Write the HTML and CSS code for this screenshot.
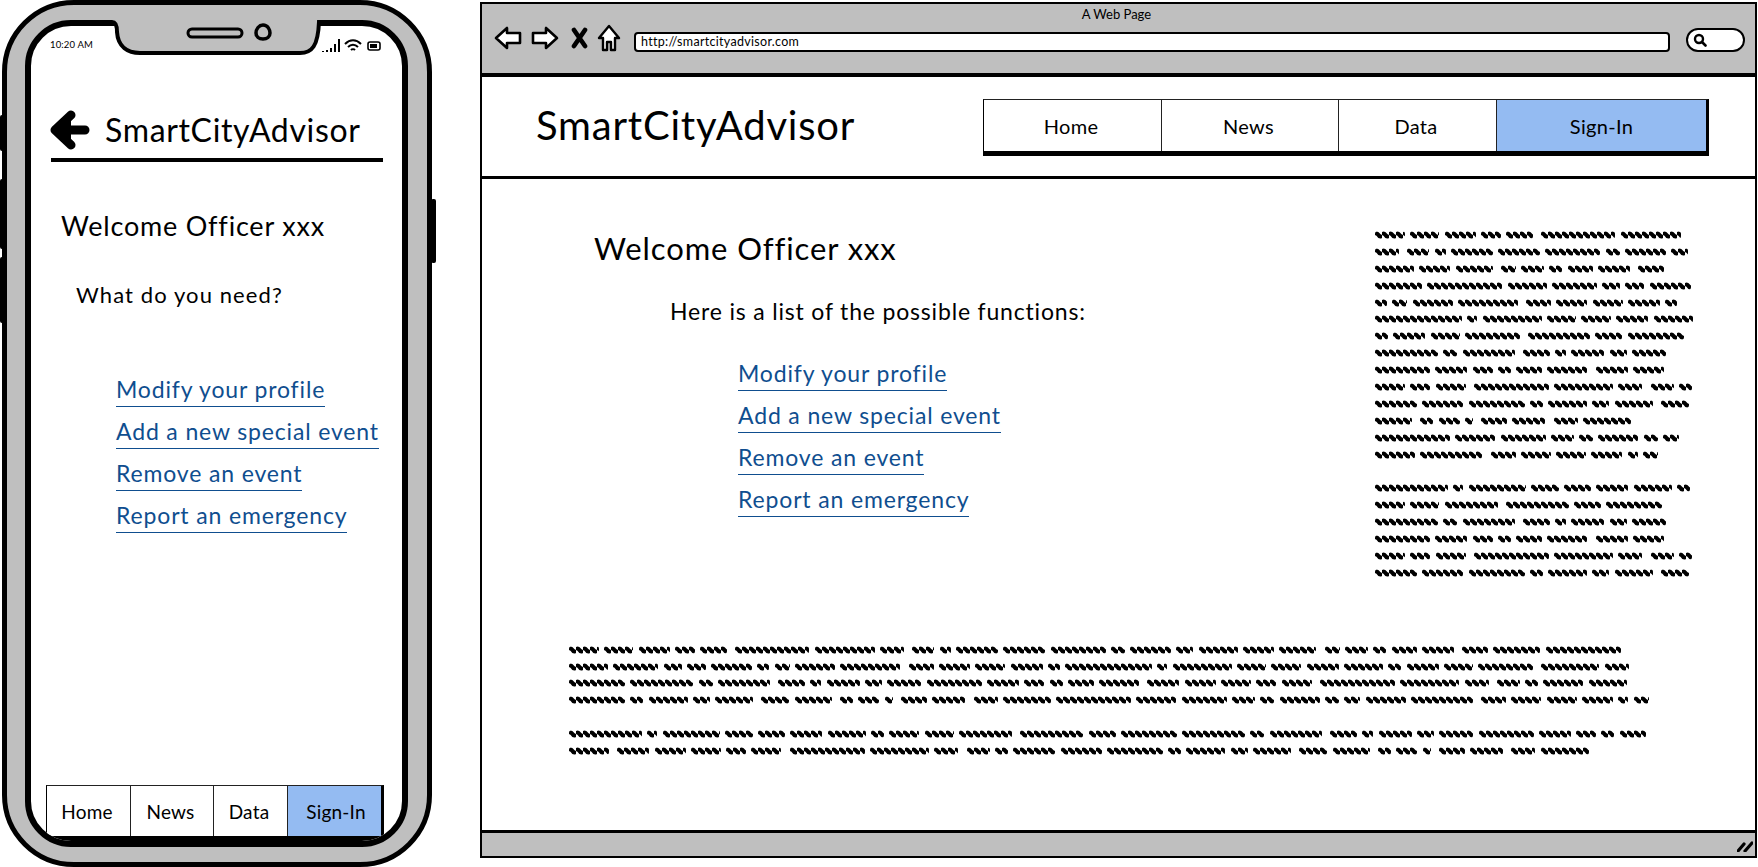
FILE: index.html
```html
<!DOCTYPE html>
<html lang="en">
<head>
<meta charset="utf-8">
<title>SmartCityAdvisor wireframes</title>
<link rel="stylesheet" href="styles.css">
</head>
<body>
<div class="desk">
  <section class="phone">
    <span class="btn btn-l1"></span><span class="btn btn-l2"></span><span class="btn btn-l3"></span><span class="btn btn-r"></span>
    <svg class="notch" width="216" height="44" viewBox="0 0 216 44">
      <path d="M-4 -4 V2 H-2 C2 2 3 6 3 12 C4 27 14 33 26 33 H186 C198 33 204 26 205 2 H209 V-4 Z" fill="#bfbfbf"/>
      <path d="M-4 2 H-2 C2 2 3 6 3 12 C4 27 14 33 26 33 H186 C198 33 204 26 205 2 H209" fill="none" stroke="#000" stroke-width="4"/>
      <rect x="74" y="9" width="54" height="8" rx="4" fill="#bfbfbf" stroke="#000" stroke-width="3"/>
      <path d="M149 5 C154 5 156 10 156 13 C156 17 153 19 149 19 C145 19 142 17 142 13 C142 9 145 5 149 5Z" fill="#bfbfbf" stroke="#000" stroke-width="3.5"/>
    </svg>
    <div class="screen">
      <div class="status">
        <span class="clock">10:20 AM</span>
        <svg class="status-icons" width="60" height="14" viewBox="0 0 60 14">
          <path d="M1 13v-1M5 13v-2M9 13v-4M13 13v-8M17 13v-13" stroke="#000" stroke-width="2" fill="none"/>
          <path d="M23 5c5-5 11-5 16 0M26 8c3-3 7-3 10 0M29 11c1-1 3-1 4 0" stroke="#000" stroke-width="2" fill="none"/>
          <rect x="46" y="3" width="12" height="8" rx="2" fill="#fff" stroke="#000" stroke-width="1.6"/>
          <rect x="48" y="5" width="7" height="4" fill="#000"/>
        </svg>
      </div>
      <header class="phone-head">
        <svg class="back" width="40" height="40" viewBox="0 0 40 40">
          <path d="M35 20H6M21 5 5 20 21 35" stroke="#000" stroke-width="9" stroke-linecap="round" stroke-linejoin="round" fill="none"/>
          <path d="M21 5 3 20 21 35Z" fill="#000"/>
        </svg>
        <h1 class="phone-title">SmartCityAdvisor</h1>
      </header>
      <h2 class="phone-welcome">Welcome Officer xxx</h2>
      <p class="phone-ask">What do you need?</p>
      <ul class="links phone-links">
        <li><a href="#">Modify your profile</a></li>
        <li><a href="#">Add a new special event</a></li>
        <li><a href="#">Remove an event</a></li>
        <li><a href="#">Report an emergency</a></li>
      </ul>
      <nav class="tabs phone-tabs">
        <a class="pt1" href="#">Home</a><a class="pt2" href="#">News</a><a class="pt3" href="#">Data</a><a class="pt4 on" href="#">Sign-In</a>
      </nav>
    </div>
  </section>

  <section class="browser">
    <div class="chrome">
      <div class="page-name">A Web Page</div>
      <div class="toolbar">
        <svg width="28" height="24" viewBox="0 0 28 24"><path d="M2 12 13 2V7H26V17H13V22Z" fill="#fff" stroke="#000" stroke-width="2.6" stroke-linejoin="round"/></svg>
        <svg class="ic-fwd" width="28" height="24" viewBox="0 0 28 24"><path d="M26 12 15 2V7H2V17H15V22Z" fill="#fff" stroke="#000" stroke-width="2.6" stroke-linejoin="round"/></svg>
        <svg class="ic-x" width="17" height="22" viewBox="0 0 17 22"><path d="M3 3 14 19M14 3 3 19" stroke="#000" stroke-width="4.6" stroke-linecap="round"/></svg>
        <svg class="ic-home" width="24" height="28" viewBox="0 0 24 28"><path d="M12 2 22 14H18V26H14V18H10V26H6V14H2Z" fill="#fff" stroke="#000" stroke-width="2.4" stroke-linejoin="round"/></svg>
        <div class="url">http://smartcityadvisor.com</div>
        <div class="search"><svg width="14" height="14" viewBox="0 0 14 14"><circle cx="6" cy="6" r="4" fill="#fff" stroke="#000" stroke-width="2.4"/><path d="M9 9 12.5 12.5" stroke="#000" stroke-width="2.6" stroke-linecap="round"/></svg></div>
      </div>
    </div>
    <header class="site-head">
      <h1 class="site-title">SmartCityAdvisor</h1>
      <nav class="tabs site-tabs">
        <a class="st1" href="#">Home</a><a class="st2" href="#">News</a><a class="st3" href="#">Data</a><a class="st4 on" href="#">Sign-In</a>
      </nav>
    </header>
    <main class="content">
      <div class="upper">
        <div class="intro">
          <h2 class="welcome">Welcome Officer xxx</h2>
          <p class="lead">Here is a list of the possible functions:</p>
          <ul class="links site-links">
            <li><a href="#">Modify your profile</a></li>
            <li><a href="#">Add a new special event</a></li>
            <li><a href="#">Remove an event</a></li>
            <li><a href="#">Report an emergency</a></li>
          </ul>
        </div>
        <div class="scribble side">
          <div class="para">
            <div class="sl"><i style="width:30px"></i><i style="width:29px"></i><i style="width:31px"></i><i style="width:20px"></i><i style="width:27px"></i><i class="g" style="width:74px"></i><i style="width:60px"></i></div>
            <div class="sl"><i style="width:24px"></i><i class="g" style="width:22px"></i><i style="width:11px"></i><i style="width:42px"></i><i style="width:42px"></i><i style="width:55px"></i><i style="width:14px"></i><i style="width:41px"></i><i style="width:17px"></i></div>
            <div class="sl"><i style="width:39px"></i><i style="width:31px"></i><i style="width:37px"></i><i class="g" style="width:15px"></i><i style="width:23px"></i><i style="width:13px"></i><i style="width:25px"></i><i style="width:32px"></i><i class="g" style="width:26px"></i></div>
            <div class="sl"><i style="width:47px"></i><i style="width:75px"></i><i style="width:39px"></i><i style="width:45px"></i><i style="width:18px"></i><i style="width:19px"></i><i style="width:41px"></i></div>
            <div class="sl"><i style="width:12px"></i><i style="width:15px"></i><i style="width:40px"></i><i style="width:60px"></i><i class="g" style="width:25px"></i><i style="width:31px"></i><i style="width:30px"></i><i style="width:32px"></i><i style="width:12px"></i></div>
            <div class="sl"><i style="width:87px"></i><i style="width:10px"></i><i style="width:59px"></i><i style="width:29px"></i><i style="width:30px"></i><i style="width:32px"></i><i style="width:39px"></i></div>
            <div class="sl"><i style="width:13px"></i><i style="width:32px"></i><i style="width:29px"></i><i style="width:55px"></i><i class="g" style="width:62px"></i><i style="width:27px"></i><i style="width:56px"></i></div>
            <div class="sl"><i style="width:63px"></i><i style="width:14px"></i><i style="width:52px"></i><i class="g" style="width:27px"></i><i style="width:11px"></i><i style="width:33px"></i><i style="width:17px"></i><i style="width:34px"></i></div>
            <div class="sl"><i style="width:55px"></i><i style="width:32px"></i><i style="width:20px"></i><i style="width:13px"></i><i style="width:26px"></i><i style="width:40px"></i><i class="g" style="width:32px"></i><i style="width:31px"></i></div>
            <div class="sl"><i style="width:30px"></i><i style="width:20px"></i><i style="width:30px"></i><i class="g" style="width:75px"></i><i style="width:59px"></i><i style="width:24px"></i><i class="g" style="width:23px"></i><i style="width:13px"></i></div>
            <div class="sl"><i style="width:42px"></i><i style="width:41px"></i><i style="width:56px"></i><i style="width:13px"></i><i style="width:39px"></i><i style="width:17px"></i><i style="width:38px"></i><i class="g" style="width:28px"></i></div>
            <div class="sl"><i style="width:37px"></i><i class="g" style="width:13px"></i><i style="width:21px"></i><i style="width:8px"></i><i class="g" style="width:26px"></i><i style="width:33px"></i><i class="g" style="width:24px"></i><i style="width:48px"></i></div>
            <div class="sl"><i style="width:75px"></i><i style="width:40px"></i><i style="width:45px"></i><i style="width:23px"></i><i style="width:14px"></i><i style="width:40px"></i><i style="width:14px"></i><i style="width:16px"></i></div>
            <div class="sl"><i style="width:40px"></i><i style="width:62px"></i><i class="g" style="width:25px"></i><i style="width:30px"></i><i style="width:30px"></i><i style="width:31px"></i><i style="width:10px"></i><i style="width:15px"></i></div>
          </div>
          <div class="para">
            <div class="sl"><i style="width:73px"></i><i style="width:10px"></i><i style="width:57px"></i><i style="width:28px"></i><i style="width:27px"></i><i style="width:32px"></i><i style="width:38px"></i><i style="width:13px"></i></div>
            <div class="sl"><i style="width:30px"></i><i style="width:29px"></i><i style="width:53px"></i><i class="g" style="width:63px"></i><i style="width:27px"></i><i style="width:56px"></i></div>
            <div class="sl"><i style="width:63px"></i><i style="width:14px"></i><i style="width:52px"></i><i class="g" style="width:27px"></i><i style="width:11px"></i><i style="width:33px"></i><i style="width:17px"></i><i style="width:34px"></i></div>
            <div class="sl"><i style="width:55px"></i><i style="width:32px"></i><i style="width:20px"></i><i style="width:13px"></i><i style="width:26px"></i><i style="width:40px"></i><i class="g" style="width:32px"></i><i style="width:31px"></i></div>
            <div class="sl"><i style="width:30px"></i><i style="width:20px"></i><i style="width:30px"></i><i class="g" style="width:75px"></i><i style="width:59px"></i><i style="width:24px"></i><i class="g" style="width:23px"></i><i style="width:13px"></i></div>
            <div class="sl"><i style="width:42px"></i><i style="width:41px"></i><i style="width:56px"></i><i style="width:13px"></i><i style="width:39px"></i><i style="width:17px"></i><i style="width:38px"></i><i class="g" style="width:28px"></i></div>
          </div>
        </div>
      </div>
      <div class="scribble bottom">
        <div class="para">
          <div class="sl"><i style="width:30px"></i><i style="width:29px"></i><i style="width:31px"></i><i style="width:20px"></i><i style="width:27px"></i><i class="g" style="width:74px"></i><i style="width:60px"></i><i style="width:24px"></i><i class="g" style="width:22px"></i><i style="width:11px"></i><i style="width:42px"></i><i style="width:42px"></i><i style="width:55px"></i><i style="width:14px"></i><i style="width:41px"></i><i style="width:17px"></i><i style="width:39px"></i><i style="width:31px"></i><i style="width:37px"></i><i class="g" style="width:15px"></i><i style="width:23px"></i><i style="width:13px"></i><i style="width:25px"></i><i style="width:32px"></i><i class="g" style="width:26px"></i><i style="width:47px"></i><i style="width:75px"></i></div>
          <div class="sl"><i style="width:39px"></i><i style="width:45px"></i><i style="width:18px"></i><i style="width:19px"></i><i style="width:41px"></i><i style="width:12px"></i><i style="width:15px"></i><i style="width:40px"></i><i style="width:60px"></i><i class="g" style="width:25px"></i><i style="width:31px"></i><i style="width:30px"></i><i style="width:32px"></i><i style="width:12px"></i><i style="width:87px"></i><i style="width:10px"></i><i style="width:59px"></i><i style="width:29px"></i><i style="width:30px"></i><i style="width:32px"></i><i style="width:39px"></i><i style="width:13px"></i><i style="width:32px"></i><i style="width:29px"></i><i style="width:55px"></i><i class="g" style="width:58px"></i><i style="width:24px"></i></div>
          <div class="sl"><i style="width:56px"></i><i style="width:63px"></i><i style="width:14px"></i><i style="width:52px"></i><i class="g" style="width:27px"></i><i style="width:11px"></i><i style="width:33px"></i><i style="width:17px"></i><i style="width:34px"></i><i style="width:55px"></i><i style="width:32px"></i><i style="width:20px"></i><i style="width:13px"></i><i style="width:26px"></i><i style="width:40px"></i><i class="g" style="width:32px"></i><i style="width:31px"></i><i style="width:30px"></i><i style="width:20px"></i><i style="width:30px"></i><i class="g" style="width:75px"></i><i style="width:59px"></i><i style="width:24px"></i><i class="g" style="width:23px"></i><i style="width:13px"></i><i style="width:40px"></i><i style="width:38px"></i></div>
          <div class="sl"><i style="width:56px"></i><i style="width:13px"></i><i style="width:39px"></i><i style="width:17px"></i><i style="width:38px"></i><i class="g" style="width:28px"></i><i style="width:37px"></i><i class="g" style="width:13px"></i><i style="width:21px"></i><i style="width:8px"></i><i class="g" style="width:26px"></i><i style="width:33px"></i><i class="g" style="width:24px"></i><i style="width:48px"></i><i style="width:75px"></i><i style="width:40px"></i><i style="width:45px"></i><i style="width:23px"></i><i style="width:14px"></i><i style="width:40px"></i><i style="width:14px"></i><i style="width:16px"></i><i style="width:40px"></i><i style="width:62px"></i><i class="g" style="width:25px"></i><i style="width:30px"></i><i style="width:30px"></i><i style="width:31px"></i><i style="width:10px"></i><i style="width:15px"></i></div>
        </div>
        <div class="para">
          <div class="sl"><i style="width:73px"></i><i style="width:10px"></i><i style="width:57px"></i><i style="width:28px"></i><i style="width:27px"></i><i style="width:32px"></i><i style="width:38px"></i><i style="width:13px"></i><i style="width:30px"></i><i style="width:29px"></i><i style="width:53px"></i><i class="g" style="width:63px"></i><i style="width:27px"></i><i style="width:56px"></i><i style="width:63px"></i><i style="width:14px"></i><i style="width:52px"></i><i class="g" style="width:27px"></i><i style="width:11px"></i><i style="width:33px"></i><i style="width:17px"></i><i style="width:34px"></i><i style="width:55px"></i><i style="width:32px"></i><i style="width:20px"></i><i style="width:13px"></i><i style="width:26px"></i></div>
          <div class="sl"><i style="width:40px"></i><i class="g" style="width:32px"></i><i style="width:31px"></i><i style="width:30px"></i><i style="width:20px"></i><i style="width:30px"></i><i class="g" style="width:75px"></i><i style="width:59px"></i><i style="width:24px"></i><i class="g" style="width:23px"></i><i style="width:13px"></i><i style="width:42px"></i><i style="width:41px"></i><i style="width:56px"></i><i style="width:13px"></i><i style="width:39px"></i><i style="width:17px"></i><i style="width:38px"></i><i class="g" style="width:28px"></i><i style="width:37px"></i><i class="g" style="width:13px"></i><i style="width:21px"></i><i style="width:8px"></i><i class="g" style="width:26px"></i><i style="width:33px"></i><i class="g" style="width:24px"></i><i style="width:48px"></i></div>
        </div>
      </div>
    </main>
    <footer class="statusbar">
      <svg class="grip" width="16" height="12" viewBox="0 0 16 12"><path d="M1 11 7 4M8 11 15 3" stroke="#000" stroke-width="3.2" stroke-linecap="round"/></svg>
    </footer>
  </section>
</div>
</body>
</html>
```

FILE: styles.css
```css
* { box-sizing: border-box; }
html, body { margin: 0; padding: 0; background: #fff; }
body { font-family: "Lato", "Noto Sans", sans-serif; color: #000; }
h1, h2, p, ul { margin: 0; padding: 0; font-weight: 400; }
ul { list-style: none; }
a { color: inherit; text-decoration: none; }

.desk { display: flex; width: 1758px; height: 867px; overflow: hidden; padding-left: 2px; }

/* Phone */
.phone { position: relative; flex: none; width: 430px; height: 867px; padding: 15px 19px 15px 18px; background: #bfbfbf; border: 5px solid #000; border-radius: 72px; }
.btn { position: absolute; width: 5px; background: #000; border-radius: 2px; }
.btn-l1 { left: -7px; top: 110px; height: 36px; }
.btn-l2 { left: -7px; top: 174px; height: 70px; }
.btn-l3 { left: -7px; top: 252px; height: 66px; }
.btn-r { right: -9px; top: 194px; height: 64px; }
.notch { position: absolute; left: 107px; top: 15px; overflow: visible; }
.screen { display: flex; flex-direction: column; height: 100%; padding: 12px 21px 0; background: #fff; border: 6px solid #000; border-radius: 46px; overflow: hidden; }
.status { display: flex; justify-content: space-between; align-items: center; height: 16px; }
.clock { font-size: 9.5px; letter-spacing: .15px; margin: -3px 0 0 -2px; }
.status-icons { margin-right: -1px; }
.phone-head { display: flex; align-items: center; gap: 15px; margin: 56px -2px 0 -1px; height: 52px; padding-bottom: 3px; border-bottom: 4px solid #000; }
.phone-title { font-size: 32px; line-height: 40px; letter-spacing: .65px; white-space: nowrap; margin-top: -5px; }
.back { flex: none; margin-top: -6px; margin-left: -1px; }
.phone-welcome { margin: 48px 0 0 9px; font-size: 27px; line-height: 32px; letter-spacing: .8px; }
.phone-ask { margin: 39px 0 0 24px; font-size: 22px; line-height: 28px; letter-spacing: 1.1px; }
.links li { height: 42px; }
.links a { display: inline-block; height: 33px; font-size: 23px; line-height: 30px; letter-spacing: .85px; color: #0f4e8f; border-bottom: 1.5px solid #0f4e8f; white-space: nowrap; }
.phone-links { margin: 65px 0 0 64px; }

.tabs { display: flex; border-top: 1.5px solid #222; border-left: 1.5px solid #000; border-right: 3px solid #000; border-bottom: 5px solid #000; }
.tabs a { display: flex; align-items: center; justify-content: center; background: #fff; border-right: 1.5px solid #222; }
.tabs a:last-child { border-right: 0; }
.tabs .on { background: #94bbf2; }
.phone-tabs { flex: none; margin: auto -3px 0 -6px; height: 56px; font-size: 19px; letter-spacing: .2px; }
.pt1 { width: 84px; padding-right: 3px; } .pt2 { width: 83px; padding-right: 3px; } .pt3 { width: 74px; padding-right: 3px; } .pt4 { flex: 1; padding-left: 3px; }

/* Browser */
.browser { display: flex; flex-direction: column; flex: none; width: 1277px; height: 856px; margin: 2px 0 0 48px; border: 2.5px solid #000; background: #fff; }
.chrome { flex: none; height: 73px; background: #bfbfbf; border-bottom: 4px solid #000; }
.page-name { height: 20px; text-align: center; font-size: 13px; line-height: 20px; margin-left: -4px; }
.toolbar { display: flex; align-items: center; height: 26px; margin-top: 1px; padding: 0 10px 0 12px; }
.ic-fwd { margin-left: 9px; }
.ic-x { margin-left: 12px; }
.ic-home { margin-left: 9px; }
.url { flex: 1; height: 20px; margin: 8px 16px 0 13px; padding-left: 5px; background: #fff; border: 2.5px solid #000; border-radius: 4px; font-size: 12.5px; line-height: 15px; letter-spacing: .3px; }
.search { display: flex; align-items: center; flex: none; width: 59px; height: 24px; margin-top: 4px; padding-left: 5px; background: #fff; border: 2.5px solid #000; border-radius: 12px; }
.site-head { display: flex; align-items: center; justify-content: space-between; flex: none; height: 102px; padding: 0 46px 0 54px; border-bottom: 3px solid #000; }
.site-title { font-size: 40px; line-height: 50px; letter-spacing: .8px; white-space: nowrap; margin-top: -4px; }
.site-tabs { height: 57px; font-size: 20px; letter-spacing: .3px; margin-top: 2px; }
.st1 { width: 178px; padding-right: 3px; } .st2 { width: 177px; padding-right: 3px; } .st3 { width: 158px; padding-right: 3px; } .st4 { width: 209px; }
.content { flex: 1; padding: 52px 0 0 87px; }
.upper { display: flex; justify-content: space-between; height: 415px; }
.intro { padding-left: 25px; margin-top: -2px; }
.welcome { font-size: 31px; line-height: 38px; letter-spacing: .9px; }
.lead { margin: 29px 0 0 76px; font-size: 23px; line-height: 30px; letter-spacing: .82px; }
.site-links { margin: 32px 0 0 144px; }
.side { width: 317px; margin-right: 63px; }
.sl { display: flex; gap: 5.3px; height: 8px; margin-bottom: 8.9px; }
.sl i { display: block; flex: none; height: 8px; border-radius: 3px; background: url("data:image/svg+xml,%3Csvg xmlns='http://www.w3.org/2000/svg' width='7' height='8'%3E%3Cpath d='M0 4 Q1.75 1 3.5 4 T7 4' stroke='%23000' stroke-width='4.2' fill='none'/%3E%3C/svg%3E") repeat-x; }
.sl .g { margin-left: 3px; }
.para + .para { margin-top: 25.6px; }
.bottom .sl { margin-bottom: 8.6px; }
.bottom .para + .para { margin-top: 26.4px; }
.statusbar { display: flex; justify-content: flex-end; align-items: center; flex: none; height: 26px; padding: 2px 2px 0 0; background: #bfbfbf; border-top: 3px solid #000; }
```
